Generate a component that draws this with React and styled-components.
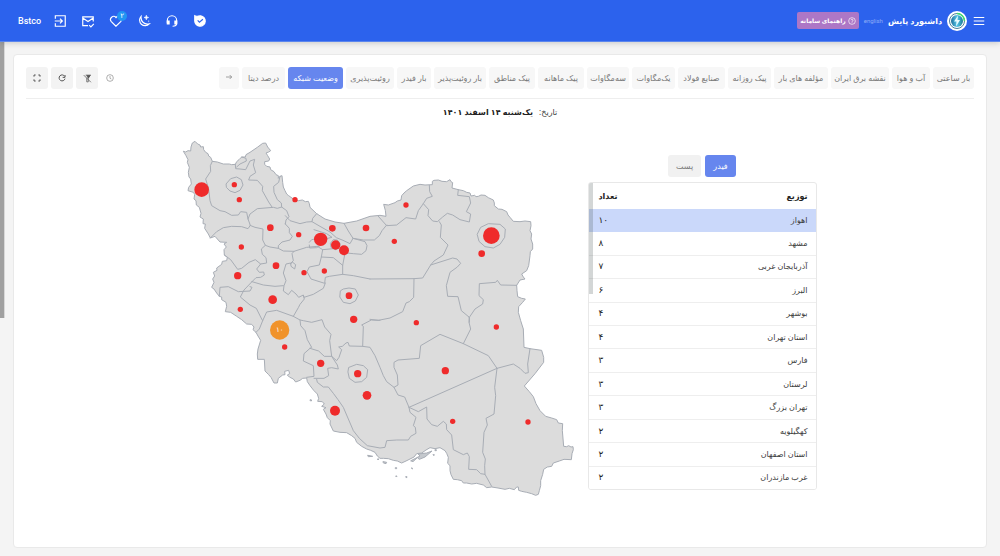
import React from 'react';
import styled, { createGlobalStyle } from 'styled-components';

const Global = createGlobalStyle`
  *, *::before, *::after { box-sizing: border-box; }
  html, body, #root { height: 100%; }
  body {
    margin: 0;
    background: #f4f4f4;
    color: #3c3c3c;
    font-family: "Noto Sans", "DejaVu Sans", sans-serif;
    font-size: 8px;
  }
  button, input { font-family: inherit; }
`;

const Page = styled.div`
  min-height: 100%;
  display: flex;
  flex-direction: column;
`;

const Header = styled.header`
  position: relative;
  display: flex;
  align-items: center;
  justify-content: space-between;
  height: 42px;
  padding: 0 14px 0 18px;
  background: #2c62ed;
  border-bottom: 1px solid #5b86ee;
  box-shadow: 0 1px 6px rgba(0, 0, 0, 0.18);
  color: #fff;
  z-index: 2;
`;

const Brand = styled.div`
  display: flex;
  align-items: center;
  gap: 5px;
`;

const Title = styled.h1`
  margin: 0;
  font-size: 8px;
  line-height: 16px;
  font-weight: 700;
`;

const LangLink = styled.a`
  color: #8fadf7;
  font-family: Roboto, sans-serif;
  font-size: 6px;
  line-height: 16px;
  text-decoration: none;
`;

const GuideButton = styled.button`
  display: flex;
  align-items: center;
  justify-content: center;
  gap: 2px;
  height: 17px;
  padding: 0 3px;
  border: 0;
  border-radius: 2px;
  background: #ad77c6;
  color: #fff;
  font-size: 6px;
  font-weight: 700;
`;

const IconButton = styled.button`
  position: relative;
  display: flex;
  align-items: center;
  justify-content: center;
  width: 14px;
  height: 16px;
  padding: 0;
  border: 0;
  background: none;
  color: inherit;
`;

const Actions = styled.div`
  display: flex;
  align-items: center;
  direction: ltr;
  gap: 14px;
`;

const UserLink = styled.a`
  margin-right: -2px;
  color: #fff;
  font-family: Roboto, sans-serif;
  font-size: 9px;
  line-height: 16px;
  font-weight: 500;
  text-decoration: none;
`;

const Badge = styled.span`
  position: absolute;
  top: -2px;
  right: -4px;
  width: 10px;
  height: 10px;
  border-radius: 50%;
  background: #2196f3;
  font-size: 7px;
  line-height: 10px;
  text-align: center;
`;

const Main = styled.main`
  position: relative;
  flex: 1;
  display: flex;
  flex-direction: column;
  padding: 12px 13px 8px;
`;

const ScrollThumb = styled.div`
  position: absolute;
  top: 0;
  left: 0;
  width: 5px;
  height: 276px;
  background: #a0a0a0;
  border-right: 1px solid #d8d8d8;
`;

const Card = styled.section`
  flex: 1;
  padding: 12px;
  background: #fff;
  border: 1px solid #e9e9e9;
  border-radius: 4px;
`;

const Toolbar = styled.div`
  display: flex;
  justify-content: space-between;
  align-items: center;
  padding-bottom: 9px;
  border-bottom: 1px solid #eee;
`;

const Tabs = styled.nav`
  display: flex;
  gap: 3px;
`;

const Tab = styled.button`
  display: flex;
  align-items: center;
  justify-content: center;
  min-width: ${(p) => p.$width}px;
  height: 22px;
  padding: 0 2px 2px;
  border: 0;
  border-radius: 3px;
  background: ${(p) => (p.$active ? '#6686ee' : '#f7f7f7')};
  color: ${(p) => (p.$active ? '#fff' : '#777')};
  font-size: 8px;
  white-space: nowrap;
`;

const Tools = styled.div`
  display: flex;
  align-items: center;
  direction: ltr;
  gap: 3px;
`;

const ToolButton = styled.button`
  display: flex;
  align-items: center;
  justify-content: center;
  width: ${(p) => (p.$plain ? 18 : 22)}px;
  height: 22px;
  padding: 0;
  border: 0;
  border-radius: 3px;
  background: ${(p) => (p.$plain ? 'none' : '#f3f3f3')};
  color: ${(p) => (p.$plain ? '#888' : '#555')};
`;

const DateLine = styled.p`
  margin: 5px 0 0;
  display: flex;
  justify-content: center;
  gap: 6px;
  font-size: 8px;
  line-height: 16px;
  strong { color: #222; }
`;

const Body = styled.div`
  display: flex;
  justify-content: center;
  align-items: flex-start;
  gap: 8px;
  padding: 10px 4px 0 0;
`;

const Panel = styled.div`
  width: 229px;
  padding-top: 25px;
`;

const Switcher = styled.div`
  display: flex;
  justify-content: center;
  gap: 4px;
  margin-bottom: 5px;
`;

const SwitchButton = styled.button`
  height: 22px;
  width: ${(p) => (p.$active ? 31 : 33)}px;
  padding: 0 0 2px;
  border: 0;
  border-radius: 3px;
  background: ${(p) => (p.$active ? '#6686ee' : '#f1f1f1')};
  color: ${(p) => (p.$active ? '#fff' : '#777')};
  font-size: 8px;
`;

const TableFrame = styled.div`
  position: relative;
  border: 1px solid #e8e8e8;
  border-radius: 3px;
  overflow: hidden;
`;

const TableThumb = styled.div`
  position: absolute;
  top: 0;
  left: 0;
  width: 4px;
  height: 111px;
  background: rgba(80, 90, 90, 0.25);
`;

const Table = styled.table`
  width: 100%;
  height: 306px;
  border-collapse: collapse;
  font-size: 8px;
  line-height: 12px;
  th, td { padding: 0 8px 1px; text-align: right; }
  th:last-child, td:last-child { text-align: left; padding-left: 10px; }
  th { color: #222; height: 26px; }
  td:last-child { font-size: 9px; color: #222; }
`;

const Row = styled.tr`
  background: ${(p) => (p.$active ? '#cad8fa' : '#fff')};
  td { border-bottom: 1px solid ${(p) => (p.$active ? '#cad8fa' : '#eee')}; }
  &:last-child td { border-bottom: 0; }
`;

const Svg = styled.svg`
  display: block;
  flex: none;
`;

const MapSvg = styled.svg`
  display: block;
  width: 400px;
  height: 370px;
`;

const Icon = ({ size = 14, children, w = 2 }) => (
  <Svg width={size} height={size} viewBox="0 0 24 24" fill="none" stroke="currentColor" strokeWidth={w} aria-hidden="true">
    {children}
  </Svg>
);

const Logo = () => (
  <Svg width="20" height="20" viewBox="0 0 40 40" aria-hidden="true">
    <defs>
      <linearGradient id="ball" x1="0" y1="0" x2="1" y2="0">
        <stop offset="0" stopColor="#1d6f9c" />
        <stop offset="0.5" stopColor="#58c6e6" />
        <stop offset="1" stopColor="#1a7a9a" />
      </linearGradient>
    </defs>
    <circle cx="20" cy="20" r="20" fill="#fff" />
    <circle cx="20" cy="20" r="15" fill="none" stroke="#4a7f9c" strokeWidth="2" />
    <path d="M20 5A15 15 0 0 1 35 20" fill="none" stroke="#3fdc72" strokeWidth="3" />
    <circle cx="20" cy="20" r="12" fill="url(#ball)" />
    <path d="M22 9L14 21H19L18 31L26 18H21Z" fill="#e9fbff" />
  </Svg>
);

const OUTLINE =
  'M41 67L47 69L54 65L62 66L63 54L67 42L75 37L83 45L90 48L92 54L100 53L101 62L107 70L114 74L116 81L122 85L127 97L142 99L160 105L178 105L185 107L196 106L200 98L207 92L215 84L226 84L228 77L240 70L262 55L278 43L287 42L293 54L302 65L296 69L288 72L293 80L299 90L296 96L284 98L284 106L290 112L300 114L302 122L312 128L318 137L325 140L325 148L330 142L336 140L338 160L340 174L345 185L350 195L356 200L370 210L385 215L397 213L406 218L415 217L418 224L420 235L440 254L465 270L495 279L522 283L560 276L600 262L630 259L648 262L646 244L641 226L655 228L675 221L682 216L693 213L695 200L702 192L710 185L730 171L750 166L765 168L787 167L787 157L792 154L805 153L816 157L830 158L840 152L843 158L848 161L846 177L865 182L880 185L890 190L900 192L903 201L914 199L918 203L925 202L933 198L945 199L955 206L970 213L973 222L973 230L985 240L996 241L1010 248L1014 258L1020 265L1030 277L1050 278L1065 276L1082 278L1083 290L1080 305L1085 315L1083 330L1088 345L1088 360L1081 368L1080 380L1076 410L1070 425L1055 435L1060 444L1065 450L1050 453L1040 469L1041 485L1043 503L1055 508L1066 510L1058 520L1046 533L1045 550L1052 575L1060 600L1062 655L1080 659L1115 664L1121 685L1121 700L1095 734L1063 771L1078 788L1090 803L1098 824L1110 845L1127 862L1145 867L1160 872L1165 882L1178 884L1177 905L1181 952L1190 953L1196 950L1203 954L1209 953L1210 962L1206 974L1204 992L1182 991L1168 996L1150 1002L1145 1012L1132 1014L1121 1021L1118 1036L1112 1055L1112 1070L1108 1085L1105 1096L1097 1099L1085 1094L1070 1090L1055 1087L1046 1084L1045 1074L1040 1074L1033 1082L1018 1078L1005 1081L984 1077L965 1074L950 1076L940 1068L920 1063L905 1065L890 1062L880 1062L875 1055L862 1052L850 1051L843 1037L840 1025L840 1010L833 1003L835 985L830 973L825 965L810 956L795 959L780 956L768 963L755 972L740 974L732 984L720 990L708 996L695 1002L682 996L670 994L655 989L640 988L630 988L622 981L615 970L602 964L590 960L575 952L560 940L555 928L545 920L530 911L510 910L490 906L480 885L481 875L472 866L468 855L460 841L468 836L455 832L463 825L457 818L443 817L446 808L442 795L431 784L420 770L412 758L410 747L398 748L390 754L377 759L370 750L358 744L352 738L359 734L356 724L344 727L345 737L338 738L325 748L322 762L312 762L303 745L295 736L285 726L283 691L263 691L262 675L264 660L272 634L264 621L258 610L249 602L252 594L245 586L230 585L215 572L200 562L182 550L166 548L170 532L168 520L155 512L155 504L148 502L140 492L132 480L125 475L132 460L128 450L134 441L130 430L141 424L140 417L155 406L157 397L170 395L172 385L163 378L162 362L169 354L162 345L170 340L150 339L135 322L121 327L115 315L104 298L106 285L99 284L100 270L90 264L93 253L88 235L79 228L78 215L72 210L74 196L70 190L54 185L56 175L64 165L62 150L57 144L55 130L58 115L52 100L54 92L48 80Z';

const BORDERS = [
  'M127 97L121 110L122 127L107 150L116 180L120 215L125 230L150 245L165 248L185 259L205 258L212 248L230 250L234 270',
  'M121 327L140 308L160 296L185 292L215 293L234 299L241 289L234 270L240 255L262 239L310 235L322 238L335 234L350 245L357 263L348 273L346 285',
  'M196 106L197 119L210 120L227 122L240 96L254 91L250 108L257 131L240 142L236 153L262 154L278 172L277 185L296 219L306 234',
  'M215 84L228 88L229 96L210 105L200 114',
  'M330 142L326 160L311 172L312 190L322 212L334 222L335 234',
  'M346 260L360 275L390 284L410 279L426 278L428 268L440 254',
  'M346 285L358 298L358 311L367 322L360 333L336 339L325 350L325 358',
  'M240 289L255 295L279 300L278 333L286 349L300 354L325 358L340 366L372 367L410 355L442 352',
  'M163 378L182 392L203 421L215 418L237 400L256 392L272 405L290 402L288 386L277 376L274 360L286 349',
  'M272 405L260 420L268 430L281 429L283 438L272 445L258 446L246 458',
  'M426 278L450 292L480 309L499 326L519 334L540 344L549 328L535 306L522 283',
  'M432 302L470 314L486 325L465 330',
  'M549 328L580 333L613 333L628 320L636 305L650 288',
  'M549 328L585 338L591 350L588 365L575 376L550 374L530 372',
  'M418 340L425 332L435 330M418 348L419 357L440 356L450 350',
  'M442 352L458 362L454 384L448 408L418 414L411 428L423 450L464 463L466 445L478 442L518 436L550 440L600 450',
  'M458 362L490 359L506 354M454 384L490 386L518 409L524 378',
  'M518 409L518 436',
  'M372 367L366 374L370 395L360 405L368 400L377 407L374 420L363 412L362 402L348 405L340 432L348 455L342 470L340 486L355 497L365 484L378 495L386 505L400 498L402 505L430 496L460 478L466 462',
  'M246 458L280 468L315 472L340 470M246 458L222 483L211 504L240 528L259 538L275 570L278 575L290 549L320 544L370 562L385 536L390 526L403 510L400 500',
  'M148 502L150 475L175 473L205 488L240 486L246 475L240 473',
  'M278 575L268 600L258 610',
  'M370 562L390 573L400 575L425 580L456 572L464 594L483 616L479 635L485 682L500 695L507 685L515 662L506 654L517 652L528 642L534 640L538 651L578 652L600 655L615 680L630 715L640 740L650 758L672 775L684 768L682 738L672 715L672 700L684 693L748 688L752 650L810 616L880 644L955 680L981 718',
  'M390 573L392 590L405 605L412 632L425 655L420 658L402 674L400 696L430 710L432 742L410 745',
  'M420 658L446 666L463 682L483 682M485 682L502 708L505 720L485 716L473 718L476 740L462 748L432 748',
  'M440 751L442 760L460 774L475 774L490 793L504 812L520 835L535 870L550 905L568 928L592 950L630 957L645 955L650 935L680 933L715 933L722 922L738 913L736 895L730 890L738 865L720 850L717 835L704 804L684 798L672 775',
  'M717 835L981 718L1030 705L1050 718L1065 733L1075 731L1073 705L1080 659',
  'M717 835L745 848L770 834L771 870L785 887L802 892L820 877L829 885L830 902L845 918L850 962L880 977L892 972L898 983L896 1021L920 1022L932 1034L945 1036L965 1072',
  'M981 718L974 775L977 800L972 855L948 868L952 888L942 910L938 970L946 990L944 1010L945 1036',
  'M578 652L580 592L575 588L604 573L630 574',
  'M512 485L520 480L537 477L556 480L565 498L556 516L540 524L520 520L510 505Z',
  'M537 715L560 706L580 710L593 722L590 745L575 758L555 760L538 748L534 730Z',
  'M169 164L182 149L200 144L214 152L219 168L210 184L195 191L180 186L170 176Z',
  'M922 315L932 295L955 284L990 286L1006 300L1004 325L990 346L970 357L945 353L928 338Z',
  'M482 342L490 332L502 333L510 344L508 356L496 362L484 356Z',
  'M625 262L650 290L680 288L708 266L737 270L745 245L760 224L770 208L787 202L779 188L778 169',
  'M760 224L776 242L774 260L788 276L802 278L818 264L832 253L848 258L870 272L898 279L902 255L889 248L902 222L898 203L863 199L865 182',
  'M808 278L814 288L811 325L834 348L820 378L792 396L782 408L758 447L732 449L600 450',
  'M782 408L848 387L861 390L872 403L862 414L840 430L829 470L833 502L864 503L874 545L898 565L898 580',
  'M898 565L915 540L938 525L940 512L927 500L928 464L977 460L982 454L992 468L1040 469',
  'M732 449L731 505L718 518L708 522L698 548L660 567L625 574L600 571',
  'M898 565L897 580L902 600L880 644',
];

const ISLANDS =
  'M723 995L750 981L744 975L770 972L786 966L765 984L748 991L742 986L730 997ZM594 979L608 982L596 983ZM640 998L650 1000L648 1004L641 1002ZM796 962L799 962L799 965L796 965ZM790 977L793 977L792 979ZM422 812L425 813L424 816L421 815ZM677 1016L680 1016L680 1019L677 1019ZM725 1017L727 1017L727 1019ZM678 1041L681 1041L680 1043ZM708 1043L711 1043L710 1046ZM623 990L627 990L625 992Z';

const POINTS = [
  [95, 182, 22], [193, 167, 8], [208, 212, 8], [375, 212, 8], [301, 296, 10], [386, 317, 8], [487, 298, 10],
  [588, 297, 10], [452, 331, 20], [497, 348, 14], [522, 364, 15], [214, 354, 8], [318, 410, 10], [203, 440, 11],
  [402, 431, 8], [463, 426, 8], [708, 228, 8], [673, 337, 8], [964, 320, 25], [935, 374, 10], [308, 512, 13],
  [211, 541, 8], [537, 500, 10], [551, 571, 11], [344, 654, 8], [452, 703, 11], [563, 734, 11], [591, 799, 13],
  [495, 845, 15], [739, 581, 8], [979, 594, 8], [826, 725, 11], [848, 877, 8], [1074, 879, 8],
];

const IranMap = () => (
  <MapSvg viewBox="30 3 1200 1110" role="img" aria-label="نقشه ایران">
    <g stroke="#a8adb5" strokeWidth="3" strokeLinejoin="round" strokeLinecap="round">
      <path d={OUTLINE} fill="#dcdcdc" />
      <path d={ISLANDS} fill="#c4c8cd" />
      <path d={BORDERS.join('')} fill="none" />
    </g>
    <g fill="#ef2b2b">
      {POINTS.map(([x, y, r]) => <circle key={`${x}-${y}`} cx={x} cy={y} r={r} />)}
    </g>
    <circle cx="329" cy="603" r="29" fill="#f0932b" />
    <text x="329" y="610" fill="#fff" fontSize="21" textAnchor="middle">۱۰</text>
  </MapSvg>
);

const TABS = [
  ['بار ساعتی', 41], ['آب و هوا', 38], ['نقشه برق ایران', 58], ['مؤلفه های بار', 54], ['پیک روزانه', 43],
  ['صنایع فولاد', 47], ['یک‌مگاوات', 43], ['سه‌مگاوات', 42], ['پیک ماهانه', 46], ['پیک مناطق', 46],
  ['بار روئیت‌پذیر', 52], ['بار فیدر', 34], ['روئیت‌پذیری', 48], ['وضعیت شبکه', 55], ['درصد دیتا', 43],
];

const ROWS = [
  ['اهواز', '۱۰'], ['مشهد', '۸'], ['آذربایجان غربی', '۷'], ['البرز', '۶'], ['بوشهر', '۴'], ['استان تهران', '۴'],
  ['فارس', '۳'], ['لرستان', '۳'], ['تهران بزرگ', '۳'], ['کهگیلویه', '۲'], ['استان اصفهان', '۲'], ['غرب مازندران', '۲'],
];

export default function App() {
  return (
    <Page dir="rtl" lang="fa">
      <Global />
      <Header>
        <Brand>
          <IconButton aria-label="منو"><Icon><path d="M3 6H21M3 12H21M3 18H21" /></Icon></IconButton>
          <Logo />
          <Title>داشبورد پایش</Title>
          <LangLink href="#en">english</LangLink>
          <GuideButton>
            <Icon size={8}><circle cx="12" cy="12" r="10" /><path d="M9 9.500A3 3 0 1 1 12 13V14.500M12 16V18" /></Icon>
            راهنمای سامانه
          </GuideButton>
        </Brand>
        <Actions>
          <UserLink href="#user">Bstco</UserLink>
          <IconButton aria-label="خروج">
            <Icon><path d="M4 8V3H21V21H4V16M3 12H16M12 8L16 12L12 16" /></Icon>
          </IconButton>
          <IconButton aria-label="پیام‌ها">
            <Icon><path d="M12 20H3V5H21V13M3 7L12 13L21 7M14 19L17 22L22 17" /></Icon>
          </IconButton>
          <IconButton aria-label="علاقه‌مندی‌ها">
            <Icon><path d="M12 21L4 13A5 5 0 0 1 12 6A5 5 0 0 1 20 13Z" /></Icon>
            <Badge>۲</Badge>
          </IconButton>
          <IconButton aria-label="حالت شب">
            <Icon w={2}>
              <path d="M7 4A9.500 9.500 0 1 0 21 17C13 19 6 13 7 4Z" />
              <path d="M16 2L17 5L20 6L17 7L16 10L15 7L12 6L15 5ZM20 11V14" fill="currentColor" strokeWidth="1" />
            </Icon>
          </IconButton>
          <IconButton aria-label="پشتیبانی">
            <Icon><path d="M4 16V11A8 8 0 0 1 20 11V16C20 20 17 21 13 21" /><path d="M4 12H7V17H4ZM17 12H20V17H17Z" fill="currentColor" /></Icon>
          </IconButton>
          <IconButton aria-label="تأیید">
            <Icon><path d="M3 3C6 5 9 3 13 3A9 9 0 1 1 3 12Z" fill="currentColor" /><path d="M8 11L11 14L17 9" stroke="#2c62ed" /></Icon>
          </IconButton>
        </Actions>
      </Header>
      <Main>
        <ScrollThumb />
        <Card>
          <Toolbar>
            <Tabs>
              {TABS.map(([t, width]) => <Tab key={t} $width={width} $active={t === 'وضعیت شبکه'}>{t}</Tab>)}
              <Tab $width={20} aria-label="بعدی"><Icon size={8}><path d="M3 12H20M14 6L20 12L14 18" /></Icon></Tab>
            </Tabs>
            <Tools>
              <ToolButton aria-label="تمام صفحه"><Icon size={8} w={3}><path d="M3 8V3H8M16 3H21V8M21 16V21H16M8 21H3V16" /></Icon></ToolButton>
              <ToolButton aria-label="بارگذاری"><Icon size={8} w={3}><path d="M20 7A9 9 0 1 0 21 14M21 3V10H14" /></Icon></ToolButton>
              <ToolButton aria-label="حذف فیلتر"><Icon size={9} w={2}><path d="M7 3H21M19 4L14 11V21H10V11" /><path d="M10 4H19L14 11Z" fill="currentColor" /><path d="M2 3L21 22" /></Icon></ToolButton>
              <ToolButton $plain aria-label="زمان"><Icon size={8} w={2}><circle cx="12" cy="12" r="10" /><path d="M12 6V13L16 15" /></Icon></ToolButton>
            </Tools>
          </Toolbar>
          <DateLine><span>تاریخ:</span><strong>یک‌شنبه ۱۴ اسفند ۱۴۰۱</strong></DateLine>
          <Body>
            <Panel>
              <Switcher>
                <SwitchButton $active>فیدر</SwitchButton>
                <SwitchButton>پست</SwitchButton>
              </Switcher>
              <TableFrame>
                <Table>
                  <thead><tr><th scope="col">توزیع</th><th scope="col">تعداد</th></tr></thead>
                  <tbody>
                    {ROWS.map(([name, count], i) => (
                      <Row key={name} $active={i === 0}><td>{name}</td><td>{count}</td></Row>
                    ))}
                  </tbody>
                </Table>
                <TableThumb />
              </TableFrame>
            </Panel>
            <IranMap />
          </Body>
        </Card>
      </Main>
    </Page>
  );
}
